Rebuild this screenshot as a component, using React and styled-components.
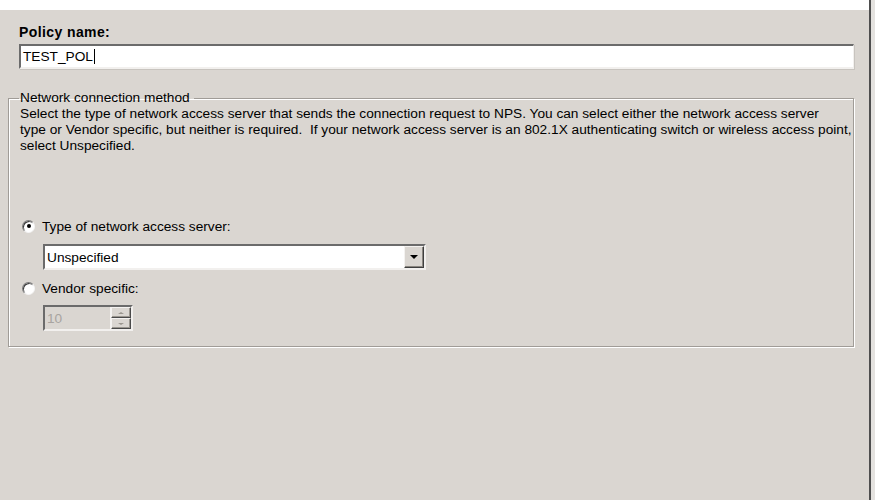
import React from "react";
import styled, { createGlobalStyle } from "styled-components";

const GlobalStyle = createGlobalStyle`
  html, body {
    margin: 0;
    padding: 0;
    background: #dad6d1;
  }
  body {
    font-family: "Liberation Sans", Arial, sans-serif;
    font-size: 13.7px;
    color: #000;
  }
`;

const Page = styled.div`
  display: flex;
  width: 875px;
  height: 500px;
  overflow: hidden;
`;

const Main = styled.div`
  flex: 1;
  min-width: 0;
  display: flex;
  flex-direction: column;
  background: #dad6d1;
`;

const TopStrip = styled.div`
  height: 10px;
  background: #ffffff;
`;

const Content = styled.div`
  padding: 14px 15px 0 8px;
`;

const NameBlock = styled.div`
  padding-left: 11px;
`;

const Label = styled.div`
  font-weight: bold;
  font-size: 14px;
  letter-spacing: 0.4px;
  line-height: 16px;
  margin-bottom: 4px;
`;

const TextBox = styled.div`
  height: 25px;
  box-sizing: border-box;
  background: #fff;
  border-top: 2px solid #6b6b6b;
  border-left: 2px solid #6b6b6b;
  border-right: 1px solid #f2f0ee;
  border-bottom: 2px solid #f2f0ee;
  box-shadow: 1px 1px 0 #c8c4bf;
  display: flex;
  align-items: center;
  padding-left: 2px;
`;

const Caret = styled.span`
  display: inline-block;
  width: 1px;
  height: 15px;
  background: #000;
  margin-left: 1px;
`;

const GroupBox = styled.fieldset`
  margin: 22px 0 0 0;
  padding: 1px 11px 14px 11px;
  height: 256px;
  box-sizing: border-box;
  border: 1px solid #a09c97;
  box-shadow: 1px 1px 0 #ffffff, inset 1px 1px 0 #ffffff;
  min-width: 0;
`;

const Legend = styled.legend`
  padding: 0 4px 0 1px;
  margin-left: -1px;
  line-height: 14px;
`;

const Description = styled.p`
  margin: 0;
  line-height: 16px;
  white-space: pre;
`;

const Options = styled.div`
  margin-top: 63px;
  display: flex;
  flex-direction: column;
`;

const RadioRow = styled.label`
  display: flex;
  align-items: center;
  gap: 7px;
  height: 18px;
  margin-left: 2px;
  margin-top: ${(p) => p.$top || "0"};
`;

const RadioDot = styled.span`
  width: 13px;
  height: 13px;
  box-sizing: border-box;
  border-radius: 50%;
  border: 1px solid;
  border-color: #7a7a7a #f4f4f4 #f4f4f4 #7a7a7a;
  background: #fff;
  box-shadow: inset 1px 1px 0 #3a3a3a;
  display: flex;
  align-items: center;
  justify-content: center;

  &::after {
    content: "";
    width: 4px;
    height: 4px;
    border-radius: 50%;
    background: ${(p) => (p.$checked ? "#000" : "transparent")};
  }
`;

const Indented = styled.div`
  padding-left: 23px;
  margin-top: ${(p) => p.$top};
`;

const Select = styled.div`
  width: 383px;
  height: 26px;
  box-sizing: border-box;
  background: #fff;
  border-top: 2px solid #6b6b6b;
  border-left: 2px solid #6b6b6b;
  border-right: 2px solid #f2f0ee;
  border-bottom: 2px solid #f2f0ee;
  display: flex;
  align-items: center;
`;

const SelectText = styled.span`
  flex: 1;
  padding-left: 2px;
`;

const ArrowButton = styled.span`
  width: 20px;
  height: 22px;
  box-sizing: border-box;
  background: #dad6d1;
  border: 1px solid;
  border-color: #f4f2f0 #3f3f3f #3f3f3f #f4f2f0;
  box-shadow: inset -1px -1px 0 #8a8680;
  display: flex;
  align-items: center;
  justify-content: center;

  &::after {
    content: "";
    border-left: 4px solid transparent;
    border-right: 4px solid transparent;
    border-top: 4px solid #000;
  }
`;

const Spinner = styled.div`
  width: 90px;
  height: 26px;
  box-sizing: border-box;
  border-top: 2px solid #6b6b6b;
  border-left: 2px solid #6b6b6b;
  border-right: 2px solid #f2f0ee;
  border-bottom: 2px solid #f2f0ee;
  display: flex;
  background: #dad6d1;
`;

const SpinValue = styled.span`
  flex: 1;
  display: flex;
  align-items: center;
  padding-left: 2px;
  color: #a8a4a0;
  border-right: 1px solid #f4f2f0;
`;

const SpinButtons = styled.div`
  width: 20px;
  display: flex;
  flex-direction: column;
`;

const SpinButton = styled.span`
  flex: 1;
  box-sizing: border-box;
  border: 1px solid;
  border-color: #f4f2f0 #4a4a4a #4a4a4a #f4f2f0;
  box-shadow: inset -1px -1px 0 #9a968f;
  display: flex;
  align-items: center;
  justify-content: center;

  &::after {
    content: "";
    border-left: 3px solid transparent;
    border-right: 3px solid transparent;
    ${(p) =>
      p.$up ? "border-bottom: 2px solid #9a968f;" : "border-top: 2px solid #9a968f;"}
  }
`;

const ScrollEdge = styled.div`
  width: 4px;
  flex-shrink: 0;
  background: #e4e2df;
  border-left: 2px solid #4e4e4e;
`;

const description =
  "Select the type of network access server that sends the connection request to NPS. You can select either the network access server\n" +
  "type or Vendor specific, but neither is required.  If your network access server is an 802.1X authenticating switch or wireless access point,\n" +
  "select Unspecified.";

export default function App() {
  return (
    <>
      <GlobalStyle />
      <Page>
        <Main>
          <TopStrip />
          <Content>
            <NameBlock>
              <Label>Policy name:</Label>
              <TextBox>
                TEST_POL
                <Caret />
              </TextBox>
            </NameBlock>
            <GroupBox>
              <Legend>Network connection method</Legend>
              <Description>{description}</Description>
              <Options>
                <RadioRow>
                  <RadioDot $checked />
                  Type of network access server:
                </RadioRow>
                <Indented $top="9px">
                  <Select>
                    <SelectText>Unspecified</SelectText>
                    <ArrowButton />
                  </Select>
                </Indented>
                <RadioRow $top="9px">
                  <RadioDot />
                  Vendor specific:
                </RadioRow>
                <Indented $top="8px">
                  <Spinner>
                    <SpinValue>10</SpinValue>
                    <SpinButtons>
                      <SpinButton $up />
                      <SpinButton />
                    </SpinButtons>
                  </Spinner>
                </Indented>
              </Options>
            </GroupBox>
          </Content>
        </Main>
        <ScrollEdge />
      </Page>
    </>
  );
}
